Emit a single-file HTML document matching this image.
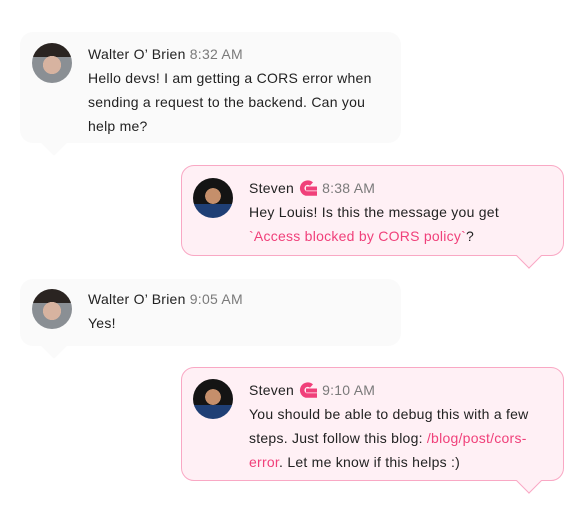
<!DOCTYPE html>
<html><head><meta charset="utf-8"><style>
*{margin:0;padding:0;box-sizing:border-box}
body{width:584px;height:528px;background:#fff;font-family:"Liberation Sans",sans-serif;position:relative;overflow:hidden;color:#222}
.b{position:absolute;border-radius:13px}
.l{background:#fafafa}
.r{background:#fff0f5;border:1px solid #f9a8c4}
.tail{position:absolute;width:20px;height:20px;transform:rotate(45deg)}
.l .tail{background:#fafafa;left:25px;bottom:-9px;width:18px;height:18px}
.r .tail{background:#fff0f5;border-right:1px solid #f9a8c4;border-bottom:1px solid #f9a8c4;right:25px;width:18px;height:18px;bottom:-10px}
.av{position:absolute;width:40px;height:40px;border-radius:50%;overflow:hidden}
.wa{background:radial-gradient(circle at 50% 55%,#d7b3a0 0 30%,transparent 31%),linear-gradient(#2a2421 0 35%,#8a8f94 35%)}
.sa{background:radial-gradient(circle at 50% 45%,#c58f6b 0 26%,transparent 27%),linear-gradient(#141414 0 65%,#1f3f75 65%)}
.t{position:absolute;font-size:14px;line-height:24px;white-space:nowrap;color:#222;letter-spacing:0.25px}
.tm{color:#7a7a7a}
.p{color:#f0407a}
.logo{display:inline-block;vertical-align:-3px;margin:0 4px 0 4px}
</style></head><body>
<div class="b l" style="left:20px;top:32px;width:381px;height:111px"><div class="tail"></div></div>
<div class="av wa" style="left:32px;top:43px"></div>
<div class="t" style="left:88px;top:42px"><span>Walter O’ Brien</span> <span class="tm">8:32 AM</span><br>Hello devs! I am getting a CORS error when<br>sending a request to the backend. Can you<br>help me?</div>

<div class="b r" style="left:181px;top:165px;width:383px;height:91px"><div class="tail"></div></div>
<div class="av sa" style="left:193px;top:178px"></div>
<div class="t" style="left:249px;top:176px"><span>Steven</span><svg class="logo" width="20" height="16" viewBox="0 0 20 16"><path d="M13.5 4A5.6 5.6 0 1 0 8 13.5H19" fill="none" stroke="#f0407a" stroke-width="4.5"/><rect x="8" y="6.5" width="11" height="4" fill="#f0407a"/></svg><span class="tm">8:38 AM</span><br>Hey Louis! Is this the message you get<br><span class="p">`Access blocked by CORS policy`</span>?</div>

<div class="b l" style="left:20px;top:279px;width:381px;height:67px"><div class="tail"></div></div>
<div class="av wa" style="left:32px;top:289px"></div>
<div class="t" style="left:88px;top:287px"><span>Walter O’ Brien</span> <span class="tm">9:05 AM</span><br>Yes!</div>

<div class="b r" style="left:181px;top:367px;width:383px;height:114px"><div class="tail"></div></div>
<div class="av sa" style="left:193px;top:379px"></div>
<div class="t" style="left:249px;top:378px"><span>Steven</span><svg class="logo" width="20" height="16" viewBox="0 0 20 16"><path d="M13.5 4A5.6 5.6 0 1 0 8 13.5H19" fill="none" stroke="#f0407a" stroke-width="4.5"/><rect x="8" y="6.5" width="11" height="4" fill="#f0407a"/></svg><span class="tm">9:10 AM</span><br>You should be able to debug this with a few<br>steps. Just follow this blog: <span class="p">/blog/post/cors-</span><br><span class="p">error</span>. Let me know if this helps :)</div>
</body></html>
